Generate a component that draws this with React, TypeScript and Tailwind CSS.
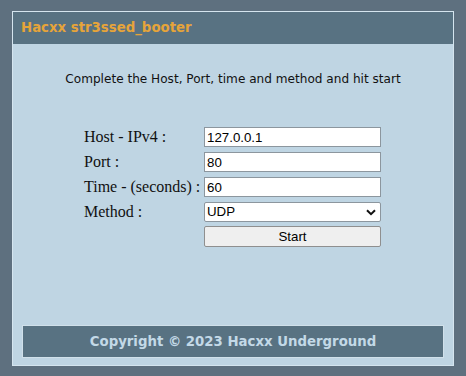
import React from 'react';

const rows = [
  { label: 'Host - IPv4 :', value: '127.0.0.1' },
  { label: 'Port :', value: '80' },
  { label: 'Time - (seconds) :', value: '60' },
];

const App: React.FC = () => {
  return (
    <div className="w-[466px] h-[376px] bg-[#5e707f] pt-[11px] pl-[12px]">
      <div className="w-[442px] h-[355px] bg-[#bfd5e3] border border-[#d5e5ef] flex flex-col">
        {/* Header */}
        <div className="h-[32px] bg-[#587282] flex items-center px-[8px]">
          <span className="font-['DejaVu_Sans',sans-serif] font-bold text-[13.3px] text-[#e6a43a]">
            Hacxx str3ssed_booter
          </span>
        </div>

        <p className="mt-[26px] text-center font-['DejaVu_Sans',sans-serif] text-[12.1px] text-[#111]">
          Complete the Host, Port, time and method and hit start
        </p>

        {/* Form */}
        <div className="mt-[39px] ml-[71px] grid grid-cols-[120px_177px] gap-y-[5px] font-['Liberation_Serif',serif] text-[16px] text-[#111]">
          {rows.map((r) => (
            <React.Fragment key={r.label}>
              <div className="h-[20px] flex items-center leading-none">{r.label}</div>
              <input
                readOnly
                value={r.value}
                className="h-[20px] w-[177px] bg-white border border-[#8c969e] px-[2px] font-['Liberation_Sans',sans-serif] text-[13.3px] text-black outline-none"
              />
            </React.Fragment>
          ))}
          <div className="h-[20px] flex items-center leading-none">Method :</div>
          <div className="h-[20px] w-[177px] bg-white border border-[#8c969e] rounded-[2px] flex items-center justify-between px-[2px] font-['Liberation_Sans',sans-serif] text-[13.3px] text-black">
            <span>UDP</span>
            <svg width="10" height="7" viewBox="0 0 10 7" className="mr-[2px]">
              <path d="M1 1.2 L5 5.2 L9 1.2" stroke="#111" strokeWidth="2" fill="none" />
            </svg>
          </div>
          <div />
          <button className="h-[21px] w-[177px] -mt-[1px] bg-[#efefef] border border-[#8f8f8f] rounded-[2px] font-['Liberation_Sans',sans-serif] text-[13.3px] text-black">
            Start
          </button>
        </div>

        <div className="flex-1" />

        {/* Footer */}
        <div className="mx-[9px] mb-[7px] h-[33px] bg-[#587282] border border-[#d0e0ea] flex items-center justify-center">
          <span className="font-['DejaVu_Sans',sans-serif] font-bold text-[13.3px] text-[#c3d9e7]">
            Copyright © 2023 Hacxx Underground
          </span>
        </div>
      </div>
    </div>
  );
};

export default App;
